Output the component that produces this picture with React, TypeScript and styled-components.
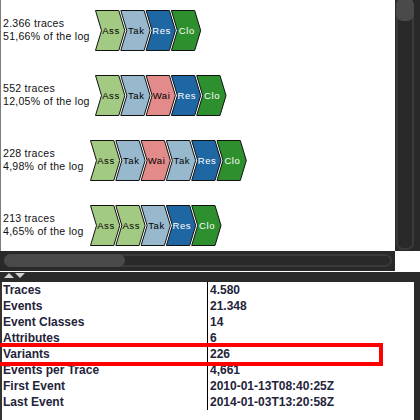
import React from "react";
import styled, { createGlobalStyle } from "styled-components";

const Global = createGlobalStyle`
  html, body { margin: 0; padding: 0; background: #2a2a2a; }
  body { font-family: "Liberation Sans", Arial, sans-serif; }
`;

const Frame = styled.div`
  width: 420px;
  height: 420px;
  display: grid;
  grid-template-rows: 251px 20px 11px 138px;
  background: #2a2a2a;
  overflow: hidden;
`;

const TopArea = styled.div`
  display: grid;
  grid-template-columns: 395px 25px;
  min-height: 0;
`;

const VariantPanel = styled.div`
  background: #fff;
  border-left: 1px solid #7d7d7d;
  padding: 10px 0 0 2px;
  display: flex;
  flex-direction: column;
  gap: 25px;
  overflow: hidden;
`;

const VariantRow = styled.div`
  display: flex;
  align-items: center;
  height: 40px;
`;

const Label = styled.div<{ $gap: number }>`
  font-family: "Liberation Sans", Arial, sans-serif;
  font-size: 10.6px;
  line-height: 13px;
  letter-spacing: 0.25px;
  color: #111;
  white-space: nowrap;
  margin-right: ${(p) => p.$gap}px;
`;

const ChevronSvg = styled.svg`
  display: block;
  flex: none;
  margin-top: 1px;
`;

const ChevText = styled.text`
  font-family: "Liberation Sans", Arial, sans-serif;
  font-size: 9.5px;
  letter-spacing: 0.6px;
`;

const VScroll = styled.div`
  background: #292929;
  padding: 0 8px 3px 3px;
  display: flex;
`;

const VTrack = styled.div`
  flex: 1;
  border: 2px solid #3a3a3a;
  border-radius: 7px;
  display: flex;
  flex-direction: column;
  margin: -2px;
`;

const VThumb = styled.div`
  height: 23px;
  background: #4a4a4a;
  border-radius: 7px;
  margin: -2px;
`;

const HRow = styled.div`
  display: grid;
  grid-template-columns: 395px 25px;
`;

const HScroll = styled.div`
  background: #292929;
  padding: 3px 3px 4px 4px;
  display: flex;
`;

const HTrack = styled.div`
  flex: 1;
  border: 2px solid #3a3a3a;
  border-radius: 7px;
  display: flex;
`;

const HThumb = styled.div`
  width: 121px;
  background: #4a4a4a;
  border-radius: 7px;
  margin: -2px;
`;

const Corner = styled.div`
  background: #fff;
`;

const Divider = styled.div`
  border-top: 1px solid #fff;
  background: #2a2a2a;
  display: flex;
  align-items: flex-start;
  padding: 1px 0 0 4px;
  gap: 1px;
`;

const Arrow = styled.div<{ $up?: boolean }>`
  width: 0;
  height: 0;
  border-left: 5px solid transparent;
  border-right: 5px solid transparent;
  ${(p) =>
    p.$up
      ? "border-bottom: 5px solid #cfcfcf;"
      : "border-top: 5px solid #cfcfcf;"}
`;

const BottomArea = styled.div`
  display: grid;
  grid-template-columns: 414px 6px;
`;

const InfoPanel = styled.div`
  position: relative;
  background: #fff;
  border-left: 2px solid #333;
`;

const InfoGrid = styled.div`
  display: grid;
  grid-template-columns: 205px 1fr;
  grid-auto-rows: 16px;
`;

const Cell = styled.div<{ $value?: boolean }>`
  font-family: "Liberation Sans", Arial, sans-serif;
  font-weight: bold;
  font-size: 12px;
  line-height: 16px;
  color: #24243a;
  white-space: nowrap;
  padding-left: ${(p) => (p.$value ? "2px" : "1px")};
  ${(p) => (p.$value ? "border-left: 1px solid #000;" : "")}
`;

const Highlight = styled.div`
  position: absolute;
  left: -14px;
  top: 61px;
  width: 387px;
  height: 15px;
  border: 4px solid #ff0000;
  pointer-events: none;
`;

const RightStrip = styled.div`
  background: #2a2a2a;
`;

type Act = "Ass" | "Tak" | "Wai" | "Res" | "Clo";

const ACT_COLORS: Record<Act, { fill: string; text: string }> = {
  Ass: { fill: "#a3ca83", text: "#000" },
  Tak: { fill: "#98b9cd", text: "#000" },
  Wai: { fill: "#e38a8a", text: "#000" },
  Res: { fill: "#1f67a3", text: "#fff" },
  Clo: { fill: "#2e8f2e", text: "#fff" },
};

const P = 25.3;
const W = 23.3;
const D = 6;
const H = 40;

function Chevrons({ acts }: { acts: Act[] }) {
  const width = acts.length * P + D + 1;
  return (
    <ChevronSvg width={width} height={H + 1} viewBox={`0 0 ${width} ${H + 1}`}>
      {acts.map((a, i) => {
        const x = i * P + 0.5;
        const pts = [
          [x, 0.5],
          [x + W, 0.5],
          [x + W + D, H / 2 + 0.5],
          [x + W, H + 0.5],
          [x, H + 0.5],
          [x + D, H / 2 + 0.5],
        ]
          .map((p) => p.join(","))
          .join(" ");
        const c = ACT_COLORS[a];
        return (
          <g key={i}>
            <polygon points={pts} fill={c.fill} stroke="#111" strokeWidth={1} />
            <ChevText
              x={x + D / 2 + W / 2 + 0.8}
              y={H / 2 + 4}
              textAnchor="middle"
              fill={c.text}
            >
              {a}
            </ChevText>
          </g>
        );
      })}
    </ChevronSvg>
  );
}

const variants: { traces: string; pct: string; acts: Act[]; gap: number }[] = [
  { traces: "2.366 traces", pct: "51,66% of the log", acts: ["Ass", "Tak", "Res", "Clo"], gap: 5 },
  { traces: "552 traces", pct: "12,05% of the log", acts: ["Ass", "Tak", "Wai", "Res", "Clo"], gap: 5 },
  { traces: "228 traces", pct: "4,98% of the log", acts: ["Ass", "Tak", "Wai", "Tak", "Res", "Clo"], gap: 6 },
  { traces: "213 traces", pct: "4,65% of the log", acts: ["Ass", "Ass", "Tak", "Res", "Clo"], gap: 6 },
];

const info: [string, string][] = [
  ["Traces", "4.580"],
  ["Events", "21.348"],
  ["Event Classes", "14"],
  ["Attributes", "6"],
  ["Variants", "226"],
  ["Events per Trace", "4,661"],
  ["First Event", "2010-01-13T08:40:25Z"],
  ["Last Event", "2014-01-03T13:20:58Z"],
];

export default function App() {
  return (
    <>
      <Global />
      <Frame>
        <TopArea>
          <VariantPanel>
            {variants.map((v, i) => (
              <VariantRow key={i}>
                <Label $gap={v.gap}>
                  <div>{v.traces}</div>
                  <div>{v.pct}</div>
                </Label>
                <Chevrons acts={v.acts} />
              </VariantRow>
            ))}
          </VariantPanel>
          <VScroll>
            <VTrack>
              <VThumb />
            </VTrack>
          </VScroll>
        </TopArea>
        <HRow>
          <HScroll>
            <HTrack>
              <HThumb />
            </HTrack>
          </HScroll>
          <Corner />
        </HRow>
        <Divider>
          <Arrow $up />
          <Arrow />
        </Divider>
        <BottomArea>
          <InfoPanel>
            <InfoGrid>
              {info.map(([k, v]) => (
                <React.Fragment key={k}>
                  <Cell>{k}</Cell>
                  <Cell $value>{v}</Cell>
                </React.Fragment>
              ))}
            </InfoGrid>
            <Highlight />
          </InfoPanel>
          <RightStrip />
        </BottomArea>
      </Frame>
    </>
  );
}
